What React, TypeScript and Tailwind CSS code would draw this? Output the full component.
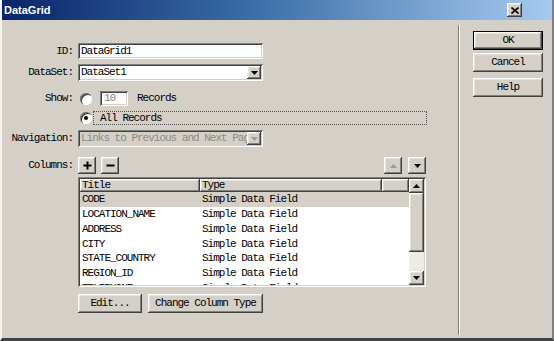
import React from "react";

const raised =
  "shadow-[inset_-1px_-1px_#404040,inset_1px_1px_#ffffff,inset_-2px_-2px_#808080,inset_2px_2px_#e6e4de]";
const sunken =
  "shadow-[inset_1px_1px_#808080,inset_-1px_-1px_#ffffff,inset_2px_2px_#404040,inset_-2px_-2px_#d4d0c8]";
const mono = "font-['Liberation_Mono',monospace] text-[11px] tracking-[-1px]";

const Arrow = ({ dir, color = "#000" }: { dir: "up" | "down"; color?: string }) => (
  <svg width="7" height="4" viewBox="0 0 7 4">
    {dir === "down" ? (
      <path d="M0 0H7L3.5 4Z" fill={color} />
    ) : (
      <path d="M0 4H7L3.5 0Z" fill={color} />
    )}
  </svg>
);

const Radio = ({ checked }: { checked?: boolean }) => (
  <div className="relative w-[12px] h-[12px] rounded-full bg-white shadow-[inset_1px_1px_#808080,inset_2px_2px_#404040,inset_-1px_-1px_#ffffff]">
    {checked && (
      <div className="absolute left-[4px] top-[4px] w-[4px] h-[4px] rounded-full bg-black" />
    )}
  </div>
);

const Label = ({ children }: { children: React.ReactNode }) => (
  <div className="w-[72px] shrink-0 text-right pr-[1px]">{children}</div>
);

const rows = [
  "CODE",
  "LOCATION_NAME",
  "ADDRESS",
  "CITY",
  "STATE_COUNTRY",
  "REGION_ID",
  "TELEPHONE",
];

export default function App() {
  return (
    <div className={`w-[554px] h-[341px] bg-[#d4d0c8] flex flex-col overflow-hidden border-l-2 border-l-[#f4f3ef] border-b-[3px] border-b-[#404040] border-r-2 border-r-[#808080] text-black ${mono}`}>
      {/* title bar */}
      <div className="h-[20px] shrink-0 flex items-center justify-between pl-[2px] pr-[30px] bg-[linear-gradient(to_right,#0a246a,#3a6ea5_45%,#a6caf0)]">
        <span className="font-['Liberation_Sans',sans-serif] font-bold text-[11px] tracking-normal text-white">
          DataGrid
        </span>
        <div className={`w-[15px] h-[14px] bg-[#d4d0c8] ${raised} flex items-center justify-center`}>
          <svg width="8" height="7" viewBox="0 0 8 7">
            <path d="M0.5 0.5L7.5 6.5M7.5 0.5L0.5 6.5" stroke="#000" strokeWidth="1.6" />
          </svg>
        </div>
      </div>

      <div className="flex flex-1">
        {/* left form */}
        <div className="w-[456px] shrink-0 flex flex-col pt-[23px]">
          <div className="flex items-center h-[16px] gap-[4px]">
            <Label>ID:</Label>
            <div className={`w-[185px] h-[16px] bg-white ${sunken} pl-[3px] leading-[16px]`}>
              DataGrid1
            </div>
          </div>

          <div className="flex items-center h-[17px] gap-[4px] mt-[5px]">
            <Label>DataSet:</Label>
            <div className={`w-[185px] h-[17px] bg-white ${sunken} pl-[3px] flex items-center justify-between pr-[2px]`}>
              <span>DataSet1</span>
              <div className={`w-[14px] h-[13px] bg-[#d4d0c8] ${raised} flex items-center justify-center`}>
                <Arrow dir="down" />
              </div>
            </div>
          </div>

          <div className="flex items-center h-[15px] gap-[4px] mt-[10px]">
            <Label>Show:</Label>
            <div className="ml-[2px]">
              <Radio />
            </div>
            <div className={`ml-[4px] w-[28px] h-[15px] bg-white ${sunken} pl-[4px] text-[#808080] leading-[15px]`}>
              10
            </div>
            <span className="ml-[5px]">Records</span>
          </div>

          <div className="flex items-center h-[14px] mt-[5px]">
            <div className="w-[72px] shrink-0" />
            <div className="ml-[6px]">
              <Radio checked />
            </div>
            <div className="ml-[1px] w-[334px] h-[14px] border border-dotted border-[#555] pl-[6px] leading-[12px]">
              All Records
            </div>
          </div>

          <div className="flex items-center h-[17px] gap-[4px] mt-[5px]">
            <Label>Navigation:</Label>
            <div className={`w-[185px] h-[17px] bg-[#d4d0c8] ${sunken} pl-[3px] flex items-center justify-between pr-[2px] text-[#8a8a8a] overflow-hidden whitespace-nowrap`}>
              <span className="overflow-hidden">Links to Previous and Next Pages</span>
              <div className={`w-[14px] h-[13px] shrink-0 bg-[#d4d0c8] ${raised} flex items-center justify-center`}>
                <Arrow dir="down" color="#9a9a9a" />
              </div>
            </div>
          </div>

          <div className="flex items-center h-[17px] gap-[4px] mt-[10px]">
            <Label>Columns:</Label>
            <div className={`w-[18px] h-[17px] ${raised} flex items-center justify-center`}>
              <svg width="9" height="9" viewBox="0 0 9 9">
                <path d="M4.5 0.5V8.5M0.5 4.5H8.5" stroke="#000" strokeWidth="2" />
              </svg>
            </div>
            <div className={`ml-[1px] w-[18px] h-[17px] ${raised} flex items-center justify-center`}>
              <svg width="9" height="9" viewBox="0 0 9 9">
                <path d="M0.5 4.5H8.5" stroke="#000" strokeWidth="2" />
              </svg>
            </div>
            <div className="flex-1" />
            <div className={`w-[18px] h-[17px] ${raised} flex items-center justify-center`}>
              <Arrow dir="up" color="#9a9a9a" />
            </div>
            <div className={`ml-[2px] mr-[32px] w-[18px] h-[17px] ${raised} flex items-center justify-center`}>
              <Arrow dir="down" />
            </div>
          </div>

          {/* list */}
          <div className={`ml-[76px] mt-[3px] w-[348px] h-[110px] bg-white ${sunken} p-[2px] flex`}>
            <div className="flex-1 flex flex-col overflow-hidden">
              <div className="h-[13px] shrink-0 flex bg-[#d4d0c8]">
                <div className={`w-[120px] h-[13px] ${raised} pl-[2px] leading-[13px]`}>Title</div>
                <div className={`w-[182px] h-[13px] ${raised} pl-[2px] leading-[13px]`}>Type</div>
                <div className={`flex-1 h-[13px] ${raised}`} />
              </div>
              {rows.map((r, i) => (
                <div
                  key={r}
                  className={`h-[14.8px] shrink-0 flex items-center ${i === 0 ? "bg-[#d4d0c8]" : ""}`}
                >
                  <span className="w-[120px] pl-[2px]">{r}</span>
                  <span className="pl-[2px]">Simple Data Field</span>
                </div>
              ))}
            </div>
            <div className="w-[15px] shrink-0 flex flex-col bg-[#ecebe6]">
              <div className={`h-[14px] bg-[#d4d0c8] ${raised} flex items-center justify-center`}>
                <Arrow dir="up" />
              </div>
              <div className={`h-[59px] bg-[#d4d0c8] ${raised}`} />
              <div className="flex-1" />
              <div className={`h-[14px] bg-[#d4d0c8] ${raised} flex items-center justify-center`}>
                <Arrow dir="down" />
              </div>
            </div>
          </div>

          <div className="flex ml-[76px] mt-[7px] gap-[6px]">
            <div className={`w-[64px] h-[19px] ${raised} flex items-center justify-center leading-none`}>Edit...</div>
            <div className={`w-[115px] h-[19px] ${raised} flex items-center justify-center leading-none`}>
              Change Column Type
            </div>
          </div>
        </div>

        {/* separator */}
        <div className="mt-[5px] mb-[3px] w-[2px] border-l border-l-[#808080] border-r border-r-white" />

        {/* right buttons */}
        <div className="flex flex-col pl-[13px] pt-[11px] gap-[3px]">
          <div className={`w-[70px] h-[19px] border border-black ${raised} flex items-center justify-center`}>
            OK
          </div>
          <div className={`w-[70px] h-[19px] ${raised} flex items-center justify-center`}>Cancel</div>
          <div className={`mt-[3px] w-[70px] h-[19px] ${raised} flex items-center justify-center`}>Help</div>
        </div>
      </div>
    </div>
  );
}
